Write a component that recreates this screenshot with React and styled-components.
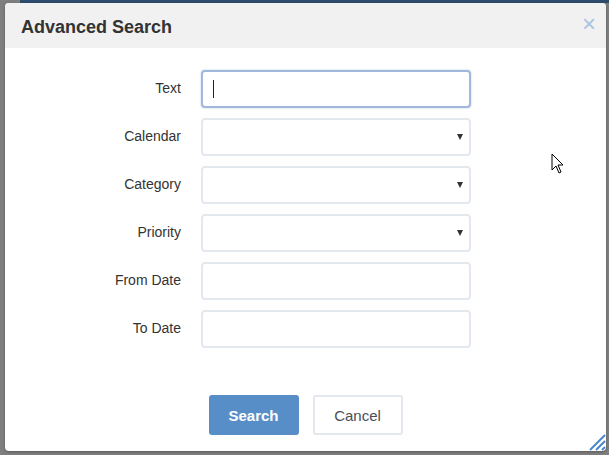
import { Fragment } from 'react'
import styled, { createGlobalStyle } from 'styled-components'

const Global = createGlobalStyle`
  html, body {
    margin: 0;
    padding: 0;
    height: 100%;
  }
  body {
    font-family: 'Liberation Sans', Arial, sans-serif;
    background: #808080;
  }
  #root {
    height: 100%;
  }
`

const Backdrop = styled.div`
  box-sizing: border-box;
  height: 455px;
  padding: 3px 3px 4px 5px;
  background:
    linear-gradient(#2e4c6d, #2e4c6d) 20px 0 / 100% 3px no-repeat,
    #7f7f7f;
`

const Dialog = styled.div`
  position: relative;
  box-sizing: border-box;
  width: 601px;
  height: 448px;
  display: flex;
  flex-direction: column;
  background: #fff;
  border-radius: 4px;
  overflow: hidden;
  box-shadow: 0 1px 3px rgba(0, 0, 0, 0.3);
`

const Header = styled.div`
  display: flex;
  align-items: center;
  justify-content: space-between;
  height: 45px;
  padding: 0 10px 0 16px;
  background: #f1f1f1;
`

const Title = styled.h1`
  margin: 4px 0 0;
  font-size: 18px;
  font-weight: bold;
  color: #333;
`

const Close = styled.span`
  font-size: 24px;
  line-height: 1;
  color: #a9c3e3;
  margin-top: -3px;
`

const Form = styled.div`
  display: grid;
  grid-template-columns: 176px 270px;
  grid-auto-rows: 38px;
  column-gap: 20px;
  row-gap: 10px;
  padding-top: 22px;
`

const Label = styled.label`
  align-self: center;
  justify-self: end;
  margin-top: -3px;
  font-size: 14px;
  color: #333;
`

const Field = styled.div`
  position: relative;
  box-sizing: border-box;
  display: flex;
  align-items: center;
  padding: 0 10px;
  border: 2px solid ${(p) => (p.$focused ? '#a2b8da' : '#e2e8ee')};
  border-radius: 4px;
  background: #fff;
  box-shadow: ${(p) => (p.$focused ? '0 0 2px rgba(120, 150, 200, 0.5)' : 'none')};
`

const Caret = styled.span`
  width: 1px;
  height: 18px;
  background: #222;
`

const Arrow = styled.span`
  position: absolute;
  right: 6px;
  top: 50%;
  margin-top: -3px;
  width: 0;
  height: 0;
  border-left: 3.5px solid transparent;
  border-right: 3.5px solid transparent;
  border-top: 6px solid #333;
`

const Footer = styled.div`
  display: flex;
  justify-content: center;
  gap: 14px;
  margin-top: 47px;
`

const Button = styled.button`
  box-sizing: border-box;
  width: 90px;
  height: 40px;
  border-radius: 3px;
  font-family: 'Liberation Sans', Arial, sans-serif;
  font-size: 15px;
  font-weight: ${(p) => (p.$primary ? 'bold' : 'normal')};
  color: ${(p) => (p.$primary ? '#fff' : '#4a4f57')};
  background: ${(p) => (p.$primary ? '#588ec8' : '#fff')};
  border: ${(p) => (p.$primary ? 'none' : '2px solid #e2e8ee')};
`

const Grip = styled.svg`
  position: absolute;
  right: 0;
  bottom: 0;
`

const Pointer = styled.svg`
  position: absolute;
  left: 546px;
  top: 150px;
`

const fields = [
  { label: 'Text', focused: true },
  { label: 'Calendar', select: true },
  { label: 'Category', select: true },
  { label: 'Priority', select: true },
  { label: 'From Date' },
  { label: 'To Date' },
]

export default function App() {
  return (
    <Backdrop>
      <Global />
      <Dialog>
        <Header>
          <Title>Advanced Search</Title>
          <Close>×</Close>
        </Header>
        <Form>
          {fields.map((f) => (
            <Fragment key={f.label}>
              <Label>{f.label}</Label>
              <Field $focused={f.focused}>
                {f.focused && <Caret />}
                {f.select && <Arrow />}
              </Field>
            </Fragment>
          ))}
        </Form>
        <Footer>
          <Button $primary>Search</Button>
          <Button>Cancel</Button>
        </Footer>
        <Grip width="18" height="18" viewBox="0 0 18 18">
          <g stroke="#4a86cc" strokeWidth="2">
            <line x1="2" y1="17" x2="17" y2="2" />
            <line x1="8" y1="17" x2="17" y2="8" />
            <line x1="14" y1="17" x2="17" y2="14" />
          </g>
        </Grip>
        <Pointer width="14" height="22" viewBox="0 0 14 22">
          <path
            d="M1 1 L1 17 L5 13 L8 20 L10 19 L7 12 L12 12 Z"
            fill="#fff"
            stroke="#000"
            strokeWidth="1"
          />
        </Pointer>
      </Dialog>
    </Backdrop>
  )
}
